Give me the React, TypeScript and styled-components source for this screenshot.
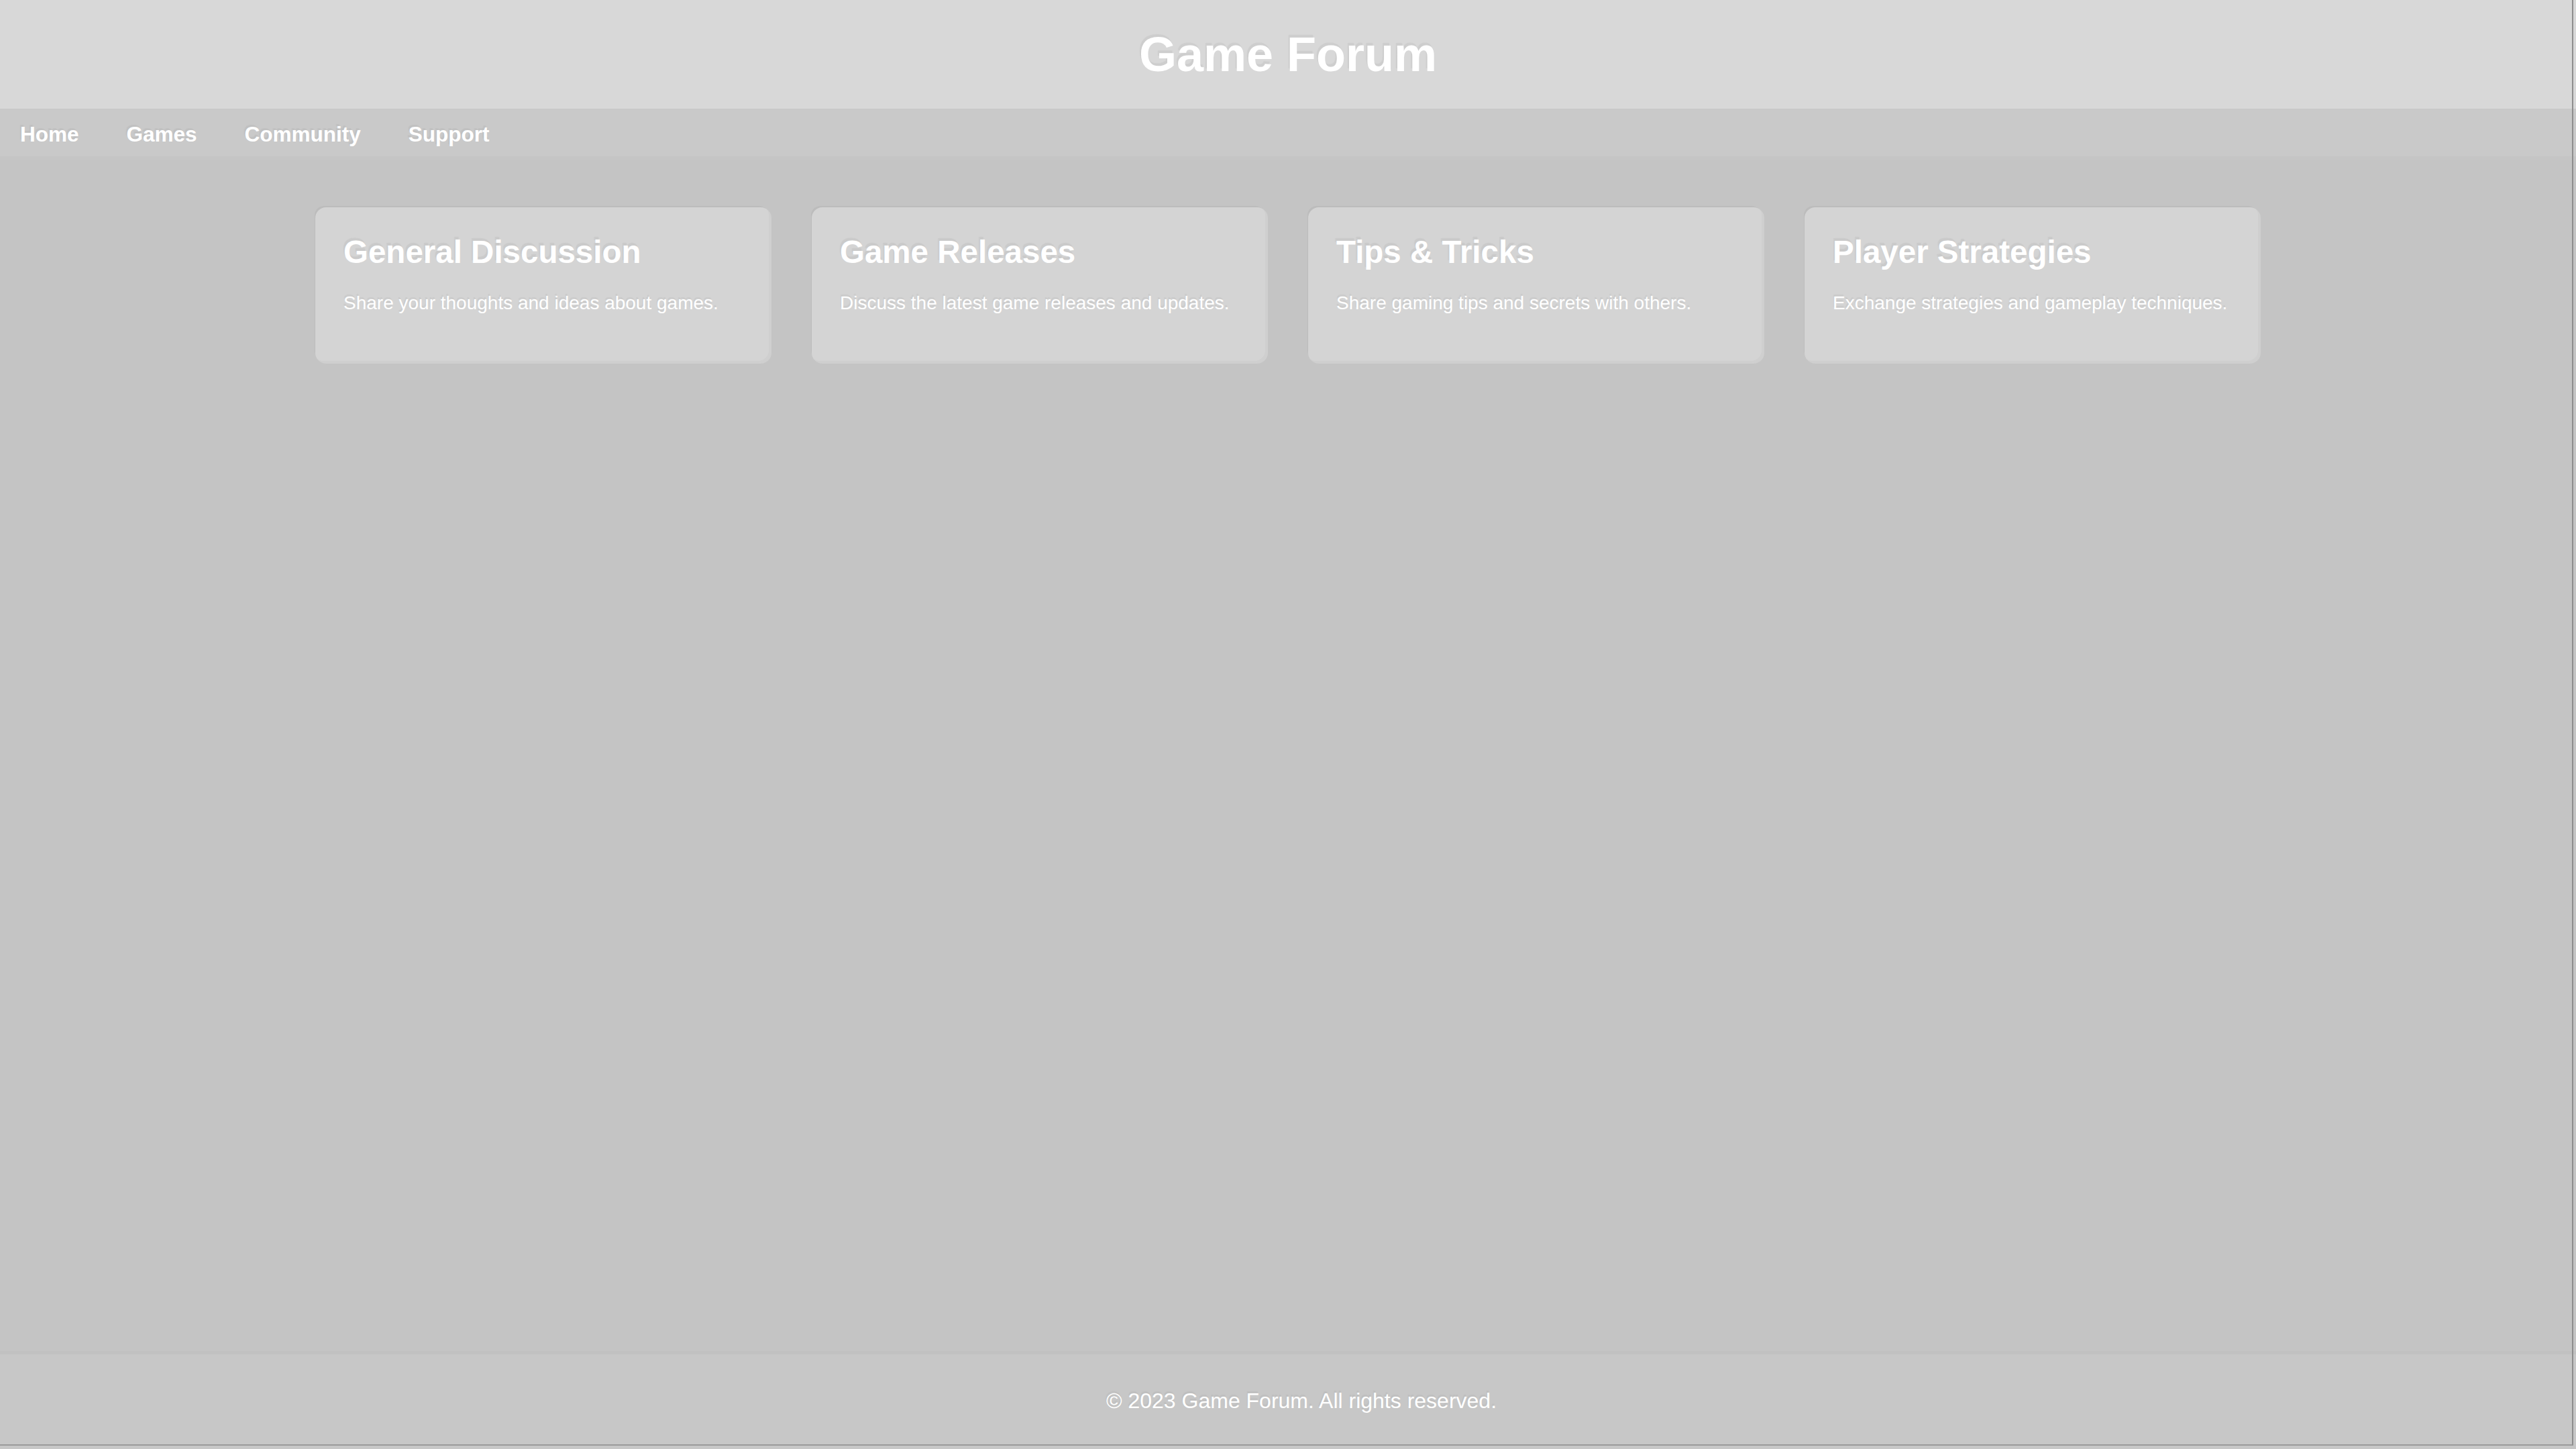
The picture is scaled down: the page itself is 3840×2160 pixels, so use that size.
import React from 'react';
import styled, { createGlobalStyle } from 'styled-components';

const forums = [
  { title: 'General Discussion', text: 'Share your thoughts and ideas about games.' },
  { title: 'Game Releases', text: 'Discuss the latest game releases and updates.' },
  { title: 'Tips & Tricks', text: 'Share gaming tips and secrets with others.' },
  { title: 'Player Strategies', text: 'Exchange strategies and gameplay techniques.' },
];

const links = ['Home', 'Games', 'Community', 'Support'];

export default function App() {
  return (
    <PAGE>
      <GlobalStyle />
      <HEADER>
        <TITLE>Game Forum</TITLE>
      </HEADER>
      <NAV>
        {links.map((link) => (
          <NAV_LINK key={link} href="#">
            {link}
          </NAV_LINK>
        ))}
      </NAV>
      <MAIN>
        <CARD_ROW>
          {forums.map((forum) => (
            <CARD key={forum.title}>
              <CARD_TITLE>{forum.title}</CARD_TITLE>
              <CARD_TEXT>{forum.text}</CARD_TEXT>
            </CARD>
          ))}
        </CARD_ROW>
      </MAIN>
      <FOOTER>
        <FOOTER_TEXT>© 2023 Game Forum. All rights reserved.</FOOTER_TEXT>
      </FOOTER>
    </PAGE>
  );
}

const GlobalStyle = createGlobalStyle`
  html, body {
    margin: 0;
    padding: 0;
    background-color: #c4c4c4;
    font-family: 'Liberation Sans', Arial, sans-serif;
  }
  * {
    box-sizing: border-box;
  }
`;

const PAGE = styled.div`
  display: flex;
  flex-direction: column;
  min-height: 100vh;
  position: relative;

  &::after {
    content: '';
    position: fixed;
    top: 0;
    left: 0;
    right: 4px;
    bottom: 5px;
    border-right: 2px solid #8e8e8e;
    border-bottom: 2px solid #9a9a9a;
    pointer-events: none;
  }
`;

const HEADER = styled.header`
  height: 162px;
  display: flex;
  align-items: center;
  justify-content: center;
  background-color: #d8d8d8;
`;

const TITLE = styled.h1`
  margin: 0;
  font-size: 72px;
  font-weight: 700;
  color: #ffffff;
  text-shadow: -2px -4px 1px rgba(90, 90, 90, 0.08);
`;

const NAV = styled.nav`
  height: 77px;
  display: flex;
  align-items: center;
  gap: 71px;
  padding: 5px 30px 0;
  background-color: #c9c9c9;
  border-bottom: 6px solid #c5c5c5;
`;

const NAV_LINK = styled.a`
  font-size: 31.5px;
  font-weight: 700;
  color: #ffffff;
  text-decoration: none;
  text-shadow: -2px -3px 1px rgba(90, 90, 90, 0.07);
`;

const MAIN = styled.main`
  flex: 1;
  padding-top: 70px;
`;

const CARD_ROW = styled.div`
  display: flex;
  justify-content: center;
  gap: 60px;
`;

const CARD = styled.section`
  width: 680px;
  height: 233px;
  padding: 39px 42px 0;
  border-radius: 16px;
  background-color: #d4d4d4;
  box-shadow: inset -4px -4px 0 rgba(0, 0, 0, 0.025), -3px -4px 0 -2px rgba(120, 120, 120, 0.1);
`;

const CARD_TITLE = styled.h2`
  margin: 0 0 33px;
  font-size: 47.5px;
  font-weight: 700;
  color: #ffffff;
  text-shadow: -2px -4px 1px rgba(90, 90, 90, 0.08);
`;

const CARD_TEXT = styled.p`
  margin: 0;
  font-size: 28px;
  color: #ffffff;
  text-shadow: -1px -3px 1px rgba(90, 90, 90, 0.07);
`;

const FOOTER = styled.footer`
  height: 146px;
  padding: 51px 0 0 40px;
  text-align: center;
  background-color: #c7c7c7;
  border-top: 5px solid #c1c1c1;
`;

const FOOTER_TEXT = styled.p`
  margin: 0;
  font-size: 32px;
  color: #ffffff;
  text-shadow: -1px -3px 1px rgba(90, 90, 90, 0.07);
`;
